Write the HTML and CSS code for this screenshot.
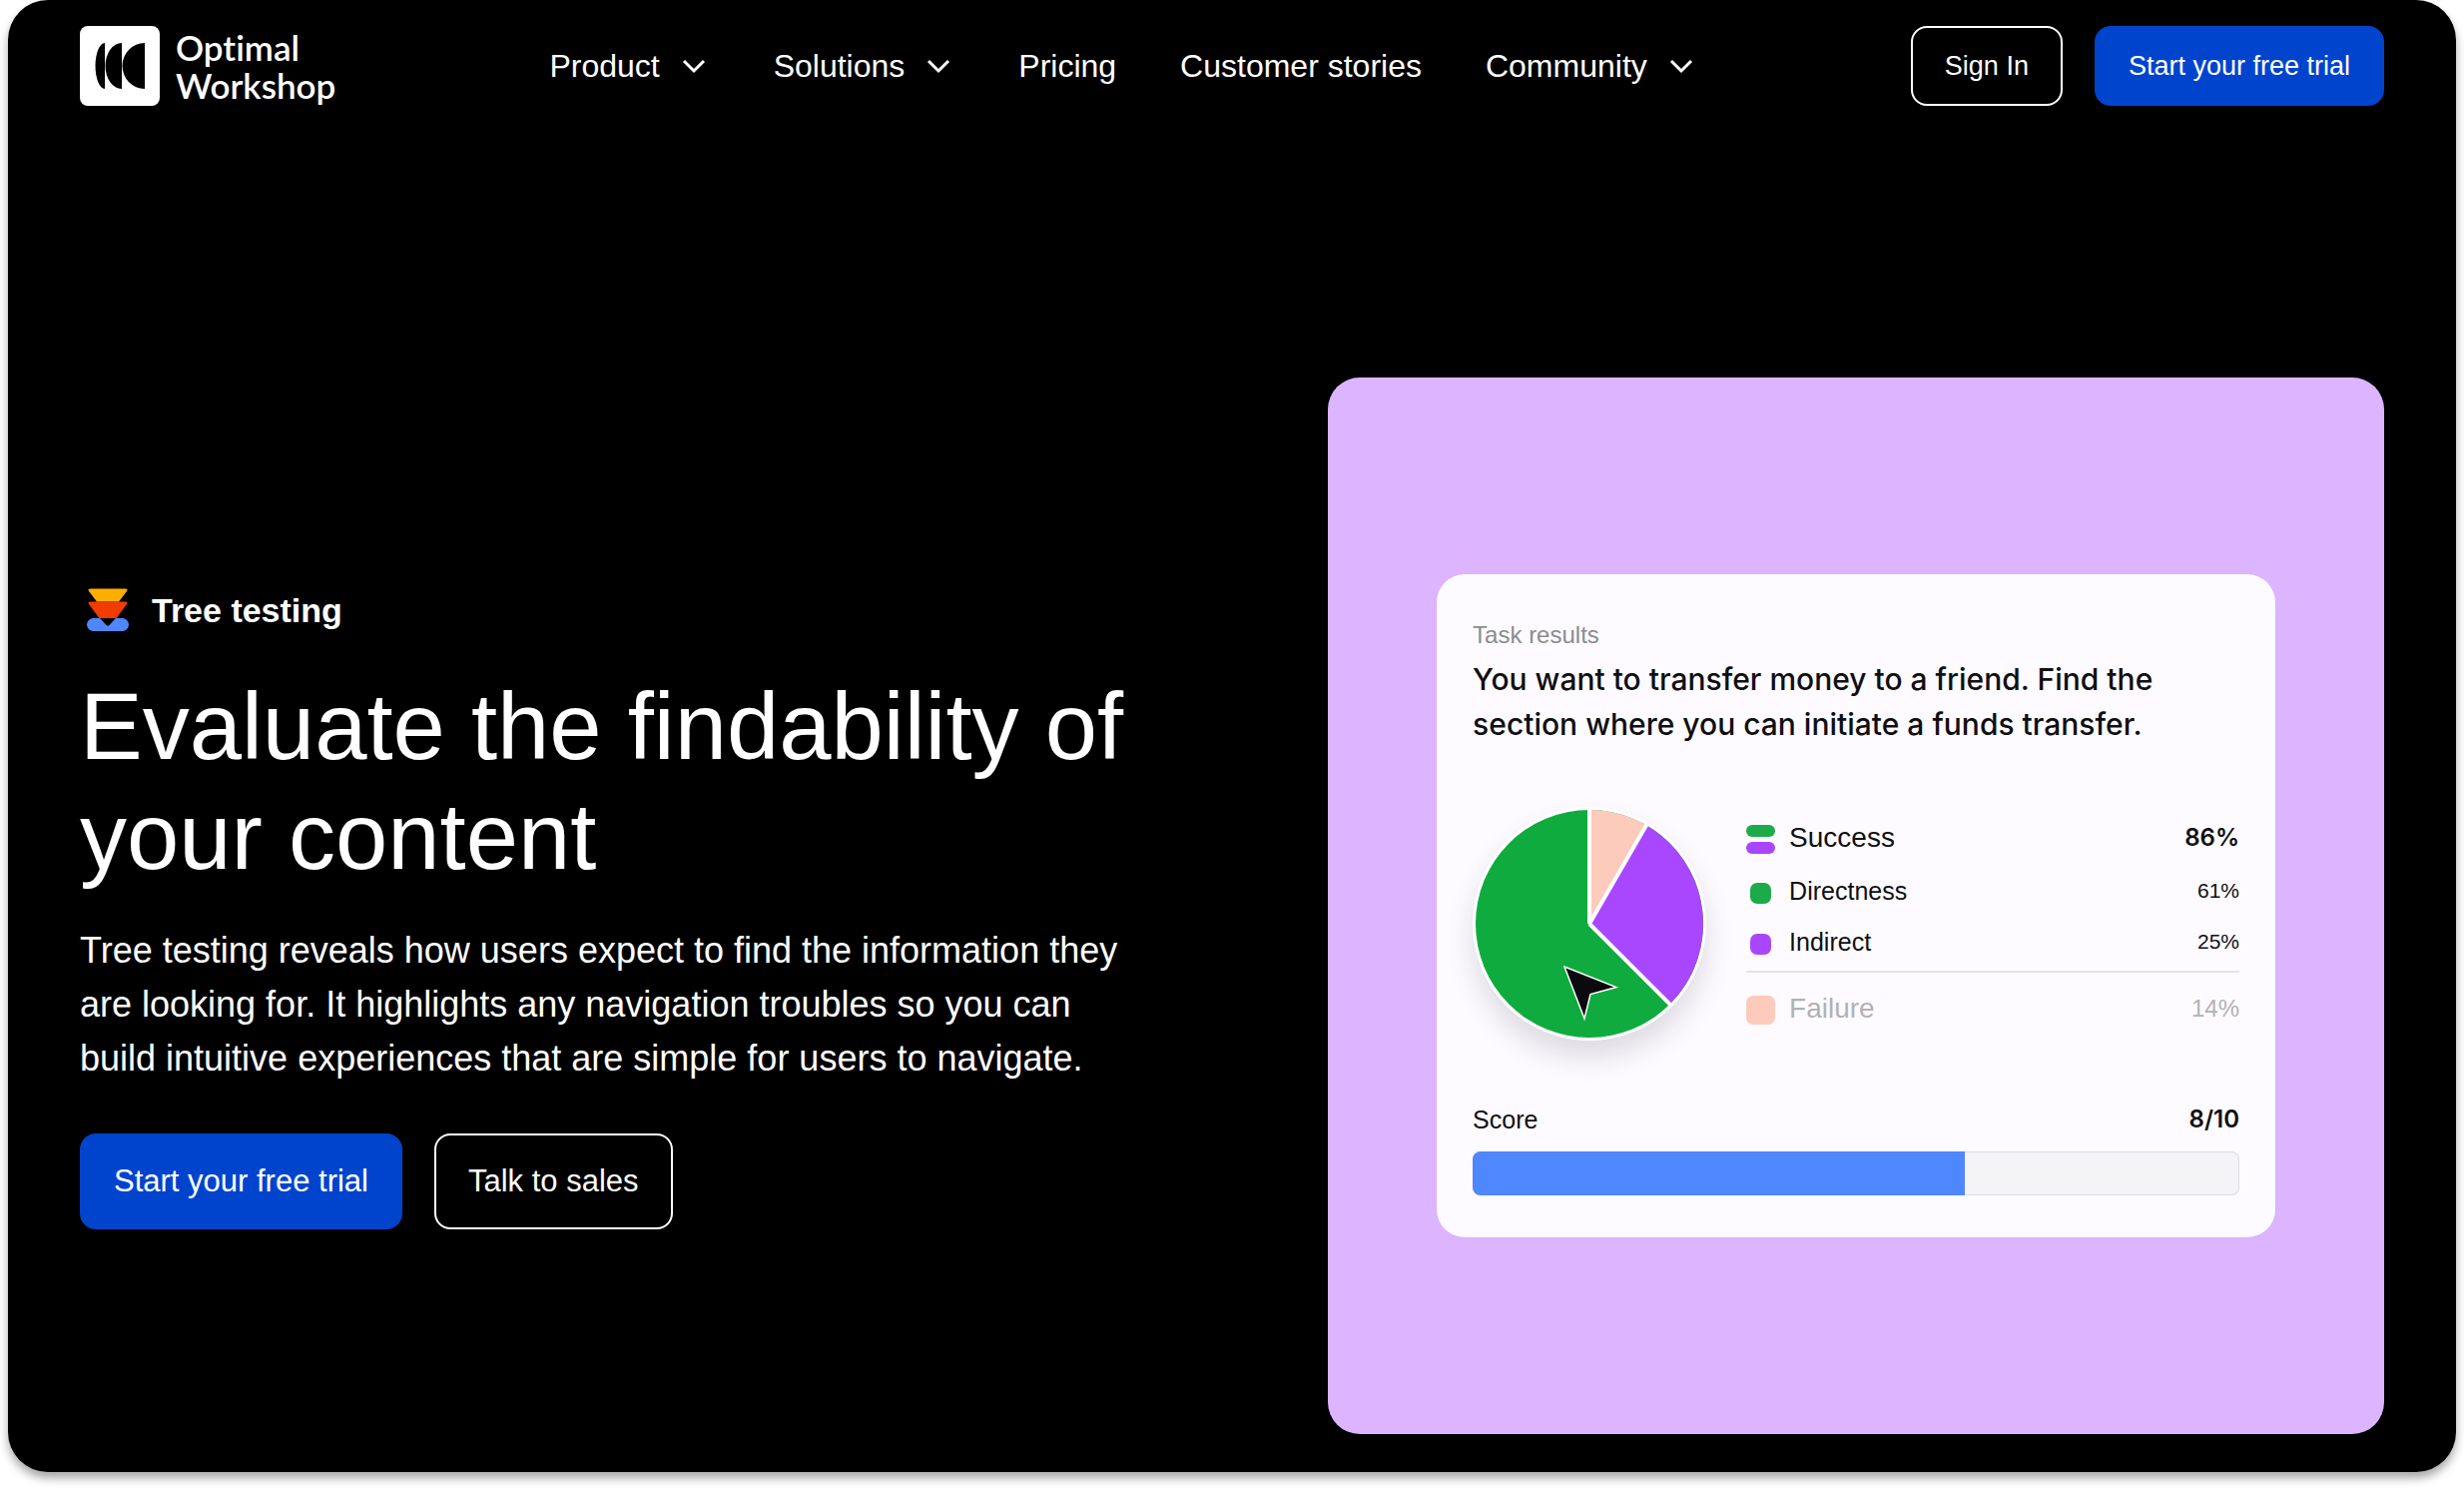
FILE: index.html
```html
<!DOCTYPE html>
<html lang="en">
<head>
<meta charset="utf-8">
<meta name="viewport" content="width=device-width, initial-scale=1">
<title>Tree testing | Optimal Workshop</title>
<link rel="stylesheet" href="styles.css">
</head>
<body>
<div class="frame">
  <header class="header">
    <a class="logo" href="#">
      <svg class="logo-mark" viewBox="0 0 80 80" aria-hidden="true">
        <rect width="80" height="80" rx="8" fill="#fff"/>
        <path d="M25 17A9.500 23 0 0 0 25 63Z M42 17A16.500 23 0 0 0 42 63Z M65 17A22.500 23 0 0 0 65 63Z" fill="#000"/>
      </svg>
      <span class="logo-text">Optimal<br>Workshop</span>
    </a>
    <nav class="nav">
      <button class="nav-item" type="button">Product
        <svg class="chevron" viewBox="0 0 32 32" aria-hidden="true"><path d="M6 11l10 10 10-10"/></svg>
      </button>
      <button class="nav-item" type="button">Solutions
        <svg class="chevron" viewBox="0 0 32 32" aria-hidden="true"><path d="M6 11l10 10 10-10"/></svg>
      </button>
      <a class="nav-item" href="#">Pricing</a>
      <a class="nav-item" href="#">Customer stories</a>
      <button class="nav-item" type="button">Community
        <svg class="chevron" viewBox="0 0 32 32" aria-hidden="true"><path d="M6 11l10 10 10-10"/></svg>
      </button>
    </nav>
    <div class="actions">
      <button class="btn btn-outline" type="button">Sign In</button>
      <button class="btn btn-primary" type="button">Start your free trial</button>
    </div>
  </header>

  <main class="hero">
    <section class="intro">
      <div class="product">
        <svg class="product-icon" viewBox="0 0 56 56" aria-hidden="true">
          <rect x="7" y="36" width="42" height="13" rx="6.500" fill="#4f87ff"/>
          <path d="M20 36h16l-6.500 7q-1.500 1.200-3 0z" fill="#000"/>
          <path d="M10.500 6.500h35q3 0 1.500 2.500L39 19.500H17L9 9Q7.500 6.500 10.500 6.500z" fill="#ffae00"/>
          <path d="M10.500 19.500h35q3 0 1.500 2.500L36.500 36h-17L9 22Q7.500 19.500 10.500 19.500z" fill="#f03c00"/>
        </svg>
        <span>Tree testing</span>
      </div>
      <h1 class="title">Evaluate the findability of your content</h1>
      <p class="lead">Tree testing reveals how users expect to find the information they are looking for. It highlights any navigation troubles so you can build intuitive experiences that are simple for users to navigate.</p>
      <div class="cta">
        <button class="btn btn-large btn-primary" type="button">Start your free trial</button>
        <button class="btn btn-large btn-outline" type="button">Talk to sales</button>
      </div>
    </section>

    <section class="showcase">
      <article class="card">
        <p class="card-label">Task results</p>
        <h2 class="card-title">You want to transfer money to a friend. Find the section where you can initiate a funds transfer.</h2>
        <div class="results">
          <svg class="pie" viewBox="-117 -117 234 234" role="img" aria-label="Success 86%, failure 14%">
            <circle r="117" fill="#fff"/>
            <circle r="114" fill="#10ab3e"/>
            <path d="M0 0V-114A114 114 0 0 1 57 -98.700Z" fill="#fdcbbb"/>
            <path d="M0 0L57 -98.700A114 114 0 0 1 80.600 80.600Z" fill="#a847ff"/>
            <path d="M0 -115V0L57.500 -99.600M0 0L81.400 81.400" fill="none" stroke="#fff" stroke-width="4" stroke-linejoin="bevel"/>
            <path d="M-25 43L27 63.500L1 70.500L-5 95Z" fill="#0b0b0f" stroke="#fff" stroke-width="1.500"/>
          </svg>
          <table class="legend">
            <tr class="row-total">
              <th scope="row"><span class="key key-split"></span>Success</th><td class="strong">86%</td>
            </tr>
            <tr class="row-part">
              <th scope="row"><span class="key key-small green"></span>Directness</th><td>61%</td>
            </tr>
            <tr class="row-part row-last">
              <th scope="row"><span class="key key-small purple"></span>Indirect</th><td>25%</td>
            </tr>
            <tr class="row-failure">
              <th scope="row"><span class="key pink"></span>Failure</th><td>14%</td>
            </tr>
          </table>
        </div>
        <div class="score">
          <span>Score</span>
          <span class="score-value">8/10</span>
        </div>
        <div class="bar" role="progressbar" aria-label="Score" aria-valuenow="8" aria-valuemin="0" aria-valuemax="10">
          <div class="bar-fill" style="width: 64.2%"></div>
        </div>
      </article>
    </section>
  </main>
</div>
</body>
</html>
```
FILE: styles.css
```css
* {
  box-sizing: border-box;
}

body {
  margin: 0;
  background: #fff;
  color: #fff;
  font-family: "Liberation Sans", Arial, sans-serif;
}

h1, h2, p {
  margin: 0;
  font-weight: 400;
}

a {
  color: inherit;
  text-decoration: none;
}

button {
  font-family: inherit;
  color: inherit;
  background: none;
  border: 0;
  cursor: pointer;
}

.frame {
  margin: 0 8px 16px;
  padding: 26px 72px 38px;
  background: #000;
  border-radius: 40px;
  box-shadow: 0 6px 10px rgba(0, 0, 0, 0.35);
}

.header {
  display: flex;
  align-items: center;
  justify-content: space-between;
}

.logo {
  display: flex;
  align-items: center;
  gap: 16px;
}

.logo-mark {
  width: 80px;
  height: 80px;
}

.logo-text {
  font-family: Lato, sans-serif;
  font-size: 35px;
  font-weight: 600;
  font-variant-ligatures: none;
  line-height: 38px;
}

.nav {
  display: flex;
  align-items: center;
  gap: 64px;
}

.nav-item {
  display: flex;
  align-items: center;
  gap: 18px;
  padding: 0;
  font-size: 32px;
  line-height: 40px;
  white-space: nowrap;
}

.chevron {
  width: 32px;
  height: 32px;
  fill: none;
  stroke: #fff;
  stroke-width: 3;
}

.actions,
.cta {
  display: flex;
  gap: 32px;
}

.btn {
  height: 80px;
  padding: 0 32px;
  border: 2px solid #fff;
  border-radius: 16px;
  font-size: 27px;
  white-space: nowrap;
}

.btn-large {
  height: 96px;
  font-size: 31px;
}

.btn-primary {
  border-color: #0044cd;
  background: #0044cd;
}

.hero {
  display: grid;
  grid-template-columns: 65fr 55fr;
  align-items: center;
  padding-top: 272px;
}

.product {
  display: flex;
  align-items: center;
  gap: 16px;
  font-size: 34px;
  font-weight: 700;
  line-height: 56px;
}

.product-icon {
  width: 56px;
  height: 56px;
}

.title {
  max-width: 1100px;
  margin-top: 34px;
  font-size: 94px;
  line-height: 110px;
}

.lead {
  max-width: 1060px;
  margin-top: 32px;
  font-size: 36px;
  line-height: 54px;
}

.cta {
  margin-top: 48px;
}

.showcase {
  display: flex;
  align-items: center;
  justify-content: center;
  aspect-ratio: 1;
  border-radius: 32px;
  background: #dcb4ff;
}

.card {
  width: 79.4%;
  padding: 45px 36px 42px;
  border-radius: 28px;
  background: #fdfbff;
  color: #0f0f12;
}

.card-label {
  color: #8b8b8f;
  font-size: 24px;
  line-height: 32px;
}

.card-title {
  margin-top: 6px;
  font-family: Inter, sans-serif;
  font-size: 30px;
  font-weight: 500;
  line-height: 45px;
}

.results {
  display: flex;
  align-items: flex-start;
  gap: 40px;
  margin-top: 60px;
}

.pie {
  width: 234px;
  height: 234px;
  flex: none;
  border-radius: 50%;
  box-shadow: 0 16px 28px rgba(30, 20, 60, 0.14);
}

.legend {
  flex: 1;
  border-collapse: collapse;
}

.legend th,
.legend td {
  padding: 0;
  font-weight: 400;
}

.legend th {
  text-align: left;
}

.legend td {
  text-align: right;
  font-size: 21px;
}

.legend .row-total {
  height: 62px;
  font-size: 28px;
}

.legend .row-part {
  height: 45px;
  font-size: 25px;
}

.legend .row-last {
  height: 58px;
  border-bottom: 2px solid #e6e4e9;
}

.legend .row-failure {
  height: 74px;
  color: #b2b1b5;
  font-size: 28px;
}

.legend .row-failure td {
  font-size: 24px;
}

.legend td.strong,
.score-value {
  font-family: Inter, sans-serif;
  font-size: 24px;
  font-weight: 600;
}

.key {
  display: inline-block;
  width: 29px;
  height: 29px;
  margin-right: 14px;
  border-radius: 7px;
  vertical-align: middle;
}

.key-small {
  width: 21px;
  height: 21px;
  margin: 0 18px 0 4px;
}

/* Two stacked pills: direct and indirect success together */
.key-split {
  display: inline-flex;
  flex-direction: column;
  justify-content: space-between;
}

.key-split::before,
.key-split::after {
  content: "";
  height: 12px;
  border-radius: 6px;
  background: #1cab49;
}

.key-split::after {
  background: #a847ff;
}

.green {
  background: #1cab49;
}

.purple {
  background: #a847ff;
}

.pink {
  background: #fdcbbb;
}

.score {
  display: flex;
  justify-content: space-between;
  margin-top: 58px;
  font-size: 25px;
  line-height: 32px;
}

.bar {
  height: 44px;
  margin-top: 16px;
  overflow: hidden;
  border-radius: 8px;
  background: #f4f3f6;
  box-shadow: inset 0 0 0 1px #dddce1;
}

.bar-fill {
  height: 100%;
  background: #4f87ff;
}
```
